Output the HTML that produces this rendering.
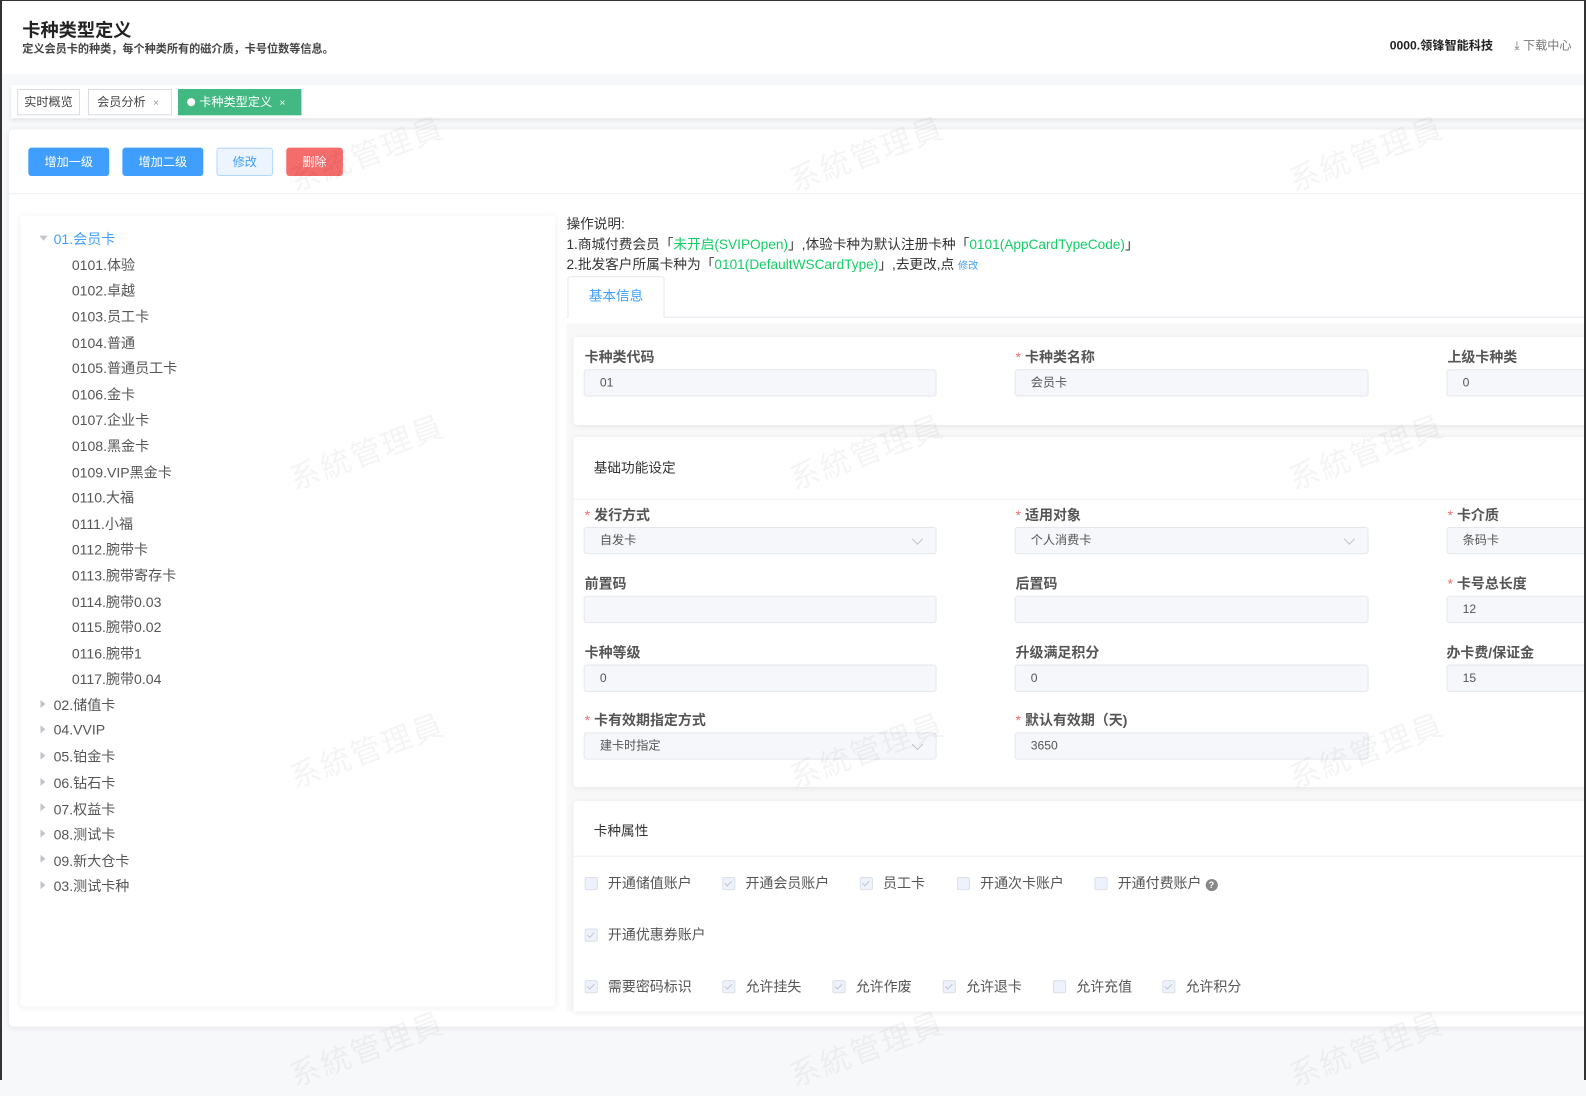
<!DOCTYPE html>
<html><head><meta charset="utf-8"><style>
*{box-sizing:border-box;margin:0;padding:0}
body{width:1586px;height:1080px;overflow:hidden;background:#f7f8fa;font-family:"Liberation Sans","Noto Sans CJK SC",sans-serif;color:#333;position:relative}
#w{position:absolute;left:0;top:0;width:1568px;height:1068px;transform:scale(1.0115);transform-origin:0 0}
.a{position:absolute}
.lbl{position:absolute;font-size:13.8px;font-weight:bold;color:#555}
.req::before{content:"*";color:#f56c6c;margin-right:4px;font-weight:normal;margin-left:-9px}
.inp{position:absolute;height:27px;background:#f5f7fa;border:1px solid #e4e7ed;border-radius:3px;font-size:12px;color:#555;padding:0 15px;line-height:25px}
.sel::after{content:"";position:absolute;right:14px;top:7px;width:7px;height:7px;border-right:1px solid #c0c4cc;border-bottom:1px solid #c0c4cc;transform:rotate(45deg)}
.tree div{position:absolute;font-size:13.9px;color:#555;white-space:nowrap}
.tri{position:absolute;width:0;height:0;border-left:5px solid #c0c4cc;border-top:4px solid transparent;border-bottom:4px solid transparent}
.cb{position:absolute;font-size:13.8px;color:#555;white-space:nowrap}
.cb i{display:inline-block;width:13px;height:13px;border:1px solid #dcdfe6;background:#edf2fc;border-radius:2px;vertical-align:-2px;margin-right:10px;position:relative}
.cb i.c::after{content:"";position:absolute;left:3px;top:1px;width:3px;height:6px;border-right:1px solid #c0c4cc;border-bottom:1px solid #c0c4cc;transform:rotate(45deg)}
.wm{position:absolute;font-size:30px;color:rgba(0,0,0,0.045);transform:rotate(-20deg);white-space:nowrap;letter-spacing:2px;z-index:9}
.card{position:absolute;background:#fff;box-shadow:0 1px 6px rgba(0,0,0,0.08);border-radius:3px}
.btn{position:absolute;height:28px;border-radius:3px;font-size:12px;color:#fff;text-align:center;line-height:28px}
</style></head><body>
<div class="a" style="left:0;top:0;width:1586px;height:74px;background:#fff"></div>
<div class="a" style="left:0;top:0;width:2px;height:1080px;background:#333;z-index:20"></div>
<div class="a" style="left:1584px;top:0;width:2px;height:1080px;background:#333;z-index:20"></div>
<div class="a" style="left:0;top:0;width:1586px;height:1px;background:#333;z-index:20"></div>
<div id="w">
<div class="a" style="left:22px;top:16px;font-size:18px;font-weight:bold;color:#222">卡种类型定义</div>
<div class="a" style="left:22px;top:40px;font-size:11px;font-weight:bold;color:#444">定义会员卡的种类，每个种类所有的磁介质，卡号位数等信息。</div>
<div class="a" style="left:1374px;top:36px;font-size:12px;font-weight:bold;color:#222">0000.领锋智能科技</div>
<div class="a" style="left:1497px;top:36px;font-size:12px;color:#777">⤓ 下载中心</div>
<div class="a" style="left:11px;top:84px;width:1575px;height:33px;background:#fff;box-shadow:0 2px 4px rgba(0,0,0,0.1)"></div>
<div class="a" style="left:17px;top:88px;width:62px;height:26px;border:1px solid #d8dce5;font-size:12px;line-height:24px;text-align:center;color:#444">实时概览</div>
<div class="a" style="left:87px;top:88px;width:83px;height:26px;border:1px solid #d8dce5;font-size:12px;line-height:24px;padding-left:8px;color:#444">会员分析 <span style="color:#999;font-size:10px;margin-left:4px">×</span></div>
<div class="a" style="left:176px;top:88px;width:122px;height:26px;background:#42b983;font-size:12px;line-height:26px;padding-left:9px;color:#fff"><span style="display:inline-block;width:8px;height:8px;border-radius:50%;background:#fff;margin-right:4px"></span>卡种类型定义 <span style="font-size:10px;margin-left:4px">×</span></div>
<div class="card" style="left:9px;top:128px;width:1577px;height:887px;border-radius:4px"></div>
<div class="a" style="left:9px;top:191px;width:1577px;height:1px;background:#ebeef5"></div>
<div class="btn" style="left:28px;top:146px;width:80px;background:#409eff">增加一级</div>
<div class="btn" style="left:121px;top:146px;width:80px;background:#409eff">增加二级</div>
<div class="btn" style="left:214px;top:146px;width:56px;background:#ecf5ff;border:1px solid #b3d8ff;color:#409eff;line-height:26px">修改</div>
<div class="btn" style="left:283px;top:146px;width:56px;background:#f56c6c">删除</div>
<div class="card tree" style="left:20px;top:213px;width:529px;height:782px">
<span class="tri" style="left:19px;top:20px;border-left:4px solid transparent;border-right:4px solid transparent;border-top:5px solid #c0c4cc;border-bottom:0"></span>
<div style="left:33px;top:13px;color:#409eff">01.会员卡</div>
<div style="left:51px;top:39px">0101.体验</div>
<div style="left:51px;top:64px">0102.卓越</div>
<div style="left:51px;top:90px">0103.员工卡</div>
<div style="left:51px;top:116px">0104.普通</div>
<div style="left:51px;top:141px">0105.普通员工卡</div>
<div style="left:51px;top:167px">0106.金卡</div>
<div style="left:51px;top:192px">0107.企业卡</div>
<div style="left:51px;top:218px">0108.黑金卡</div>
<div style="left:51px;top:244px">0109.VIP黑金卡</div>
<div style="left:51px;top:269px">0110.大福</div>
<div style="left:51px;top:295px">0111.小福</div>
<div style="left:51px;top:320px">0112.腕带卡</div>
<div style="left:51px;top:346px">0113.腕带寄存卡</div>
<div style="left:51px;top:372px">0114.腕带0.03</div>
<div style="left:51px;top:397px">0115.腕带0.02</div>
<div style="left:51px;top:423px">0116.腕带1</div>
<div style="left:51px;top:448px">0117.腕带0.04</div>
<span class="tri" style="left:20px;top:479px"></span><div style="left:33px;top:474px">02.储值卡</div>
<span class="tri" style="left:20px;top:504px"></span><div style="left:33px;top:500px">04.VVIP</div>
<span class="tri" style="left:20px;top:530px"></span><div style="left:33px;top:525px">05.铂金卡</div>
<span class="tri" style="left:20px;top:556px"></span><div style="left:33px;top:551px">06.钻石卡</div>
<span class="tri" style="left:20px;top:581px"></span><div style="left:33px;top:577px">07.权益卡</div>
<span class="tri" style="left:20px;top:607px"></span><div style="left:33px;top:602px">08.测试卡</div>
<span class="tri" style="left:20px;top:632px"></span><div style="left:33px;top:628px">09.新大仓卡</div>
<span class="tri" style="left:20px;top:658px"></span><div style="left:33px;top:653px">03.测试卡种</div>
</div>
<div class="a" style="left:560px;top:212px;font-size:13.5px;color:#333;line-height:20px">操作说明:<br>1.商城付费会员「<span style="color:#13ce66">未开启(SVIPOpen)</span>」,体验卡种为默认注册卡种「<span style="color:#13ce66">0101(AppCardTypeCode)</span>」<br>2.批发客户所属卡种为「<span style="color:#13ce66">0101(DefaultWSCardType)</span>」,去更改,点 <span style="color:#409eff;font-size:10px">修改</span></div>
<div class="a" style="left:560px;top:313px;width:1026px;height:1px;background:#e4e7ed"></div>
<div class="a" style="left:561px;top:273px;width:96px;height:41px;background:#fff;border:1px solid #e4e7ed;border-bottom:none;border-radius:3px 3px 0 0;font-size:13.5px;color:#409eff;text-align:center;line-height:38px">基本信息</div>
<div class="a" style="left:560px;top:320px;width:1026px;height:680px;background:#f8f8f9"></div>
<div class="card" style="left:567px;top:333px;width:1019px;height:87px"></div>
<div class="lbl" style="left:578px;top:342px">卡种类代码</div>
<div class="inp" style="left:577px;top:365px;width:349px">01</div>
<div class="lbl req" style="left:1013px;top:342px">卡种类名称</div>
<div class="inp" style="left:1003px;top:365px;width:350px">会员卡</div>
<div class="lbl" style="left:1431px;top:342px">上级卡种类</div>
<div class="inp" style="left:1430px;top:365px;width:156px">0</div>
<div class="card" style="left:567px;top:432px;width:1019px;height:346px"></div>
<div class="a" style="left:567px;top:493px;width:1019px;height:1px;background:#ebeef5"></div>
<div class="a" style="left:587px;top:451px;font-size:13.5px;color:#333">基础功能设定</div>
<div class="lbl req" style="left:587px;top:498px">发行方式</div>
<div class="inp sel" style="left:577px;top:521px;width:349px">自发卡</div>
<div class="lbl req" style="left:1013px;top:498px">适用对象</div>
<div class="inp sel" style="left:1003px;top:521px;width:350px">个人消费卡</div>
<div class="lbl req" style="left:1440px;top:498px">卡介质</div>
<div class="inp" style="left:1430px;top:521px;width:156px">条码卡</div>
<div class="lbl" style="left:578px;top:566px">前置码</div>
<div class="inp" style="left:577px;top:589px;width:349px"></div>
<div class="lbl" style="left:1004px;top:566px">后置码</div>
<div class="inp" style="left:1003px;top:589px;width:350px"></div>
<div class="lbl req" style="left:1440px;top:566px">卡号总长度</div>
<div class="inp" style="left:1430px;top:589px;width:156px">12</div>
<div class="lbl" style="left:578px;top:634px">卡种等级</div>
<div class="inp" style="left:577px;top:657px;width:349px">0</div>
<div class="lbl" style="left:1004px;top:634px">升级满足积分</div>
<div class="inp" style="left:1003px;top:657px;width:350px">0</div>
<div class="lbl" style="left:1430px;top:634px">办卡费/保证金</div>
<div class="inp" style="left:1430px;top:657px;width:156px">15</div>
<div class="lbl req" style="left:587px;top:701px">卡有效期指定方式</div>
<div class="inp sel" style="left:577px;top:724px;width:349px">建卡时指定</div>
<div class="lbl req" style="left:1013px;top:701px">默认有效期（天)</div>
<div class="inp" style="left:1003px;top:724px;width:350px">3650</div>
<div class="card" style="left:567px;top:792px;width:1019px;height:208px;border-radius:3px 3px 0 0"></div>
<div class="a" style="left:567px;top:846px;width:1019px;height:1px;background:#ebeef5"></div>
<div class="a" style="left:587px;top:810px;font-size:13.5px;color:#333">卡种属性</div>
<div class="cb" style="left:578px;top:862px"><i></i>开通储值账户</div>
<div class="cb" style="left:714px;top:862px"><i class="c"></i>开通会员账户</div>
<div class="cb" style="left:850px;top:862px"><i class="c"></i>员工卡</div>
<div class="cb" style="left:946px;top:862px"><i></i>开通次卡账户</div>
<div class="cb" style="left:1082px;top:862px"><i></i>开通付费账户 <span style="display:inline-block;width:12px;height:12px;border-radius:50%;background:#888;color:#fff;font-size:9px;text-align:center;line-height:12px;font-weight:bold">?</span></div>
<div class="cb" style="left:578px;top:913px"><i class="c"></i>开通优惠券账户</div>
<div class="cb" style="left:578px;top:964px"><i class="c"></i>需要密码标识</div>
<div class="cb" style="left:714px;top:964px"><i class="c"></i>允许挂失</div>
<div class="cb" style="left:823px;top:964px"><i class="c"></i>允许作废</div>
<div class="cb" style="left:932px;top:964px"><i class="c"></i>允许退卡</div>
<div class="cb" style="left:1041px;top:964px"><i></i>允许充值</div>
<div class="cb" style="left:1149px;top:964px"><i class="c"></i>允许积分</div>
<div class="wm" style="left:282px;top:128px">系統管理員</div>
<div class="wm" style="left:776px;top:128px">系統管理員</div>
<div class="wm" style="left:1270px;top:128px">系統管理員</div>
<div class="wm" style="left:282px;top:423px">系統管理員</div>
<div class="wm" style="left:776px;top:423px">系統管理員</div>
<div class="wm" style="left:1270px;top:423px">系統管理員</div>
<div class="wm" style="left:282px;top:718px">系統管理員</div>
<div class="wm" style="left:776px;top:718px">系統管理員</div>
<div class="wm" style="left:1270px;top:718px">系統管理員</div>
<div class="wm" style="left:282px;top:1013px">系統管理員</div>
<div class="wm" style="left:776px;top:1013px">系統管理員</div>
<div class="wm" style="left:1270px;top:1013px">系統管理員</div>
</div>
</body></html>
